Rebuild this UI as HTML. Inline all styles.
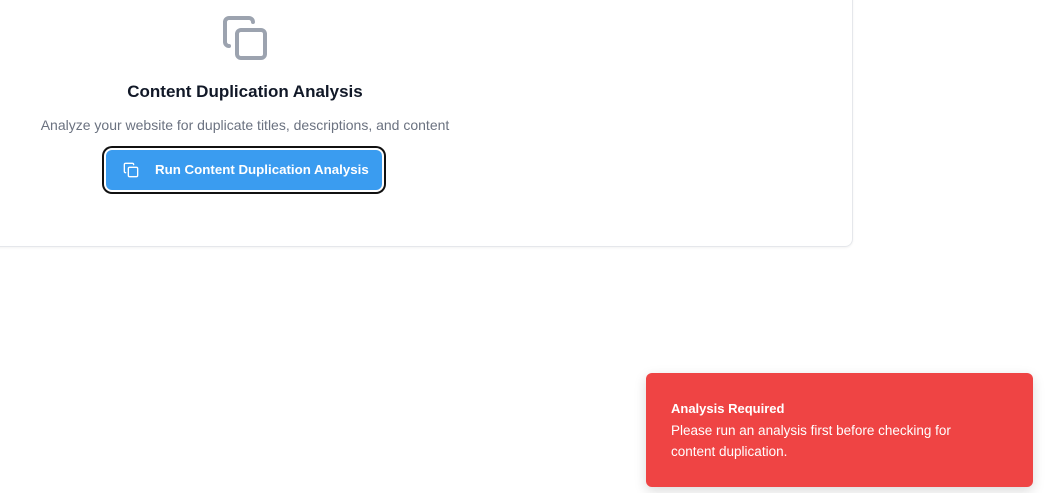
<!DOCTYPE html>
<html><head><style>
body{margin:0;width:1049px;height:493px;background:#fff;font-family:"Liberation Sans",sans-serif;position:relative;overflow:hidden}
.card{position:absolute;left:-400px;top:-10px;width:1251px;height:255px;border:1px solid #e5e7eb;border-radius:8px;box-shadow:0 1px 2px rgba(0,0,0,.05)}
.c{position:absolute;left:0;width:490px;text-align:center}
.btn{position:absolute;left:106px;top:150px;width:276px;height:40px;box-sizing:border-box;background:#3a9cf0;border-radius:6px;box-shadow:0 0 0 2px #fff,0 0 0 4px #111;color:#fff;font-weight:bold;font-size:13.3px;line-height:40px}
.toast{position:absolute;left:646px;top:373px;width:387px;height:114px;background:#ef4444;border-radius:6px;box-shadow:0 4px 12px rgba(0,0,0,.15);color:#fff;box-sizing:border-box;padding:28px 25px}
</style></head><body>
<div class="card"></div>
<svg style="position:absolute;left:221px;top:14px" width="48" height="48" viewBox="0 0 24 24" fill="none" stroke="#9ca3af" stroke-width="2" stroke-linecap="round" stroke-linejoin="round"><rect x="8" y="8" width="14" height="14" rx="2"/><path d="M4 16c-1.1 0-2-.9-2-2V4c0-1.1.9-2 2-2h10c1.1 0 2 .9 2 2"/></svg>
<div class="c" style="top:82px;font-size:17px;font-weight:bold;color:#111827">Content Duplication Analysis</div>
<div class="c" style="top:117px;font-size:14px;color:#6b7280">Analyze your website for duplicate titles, descriptions, and content</div>
<div class="btn"><svg style="position:absolute;left:17px;top:12px" width="16" height="16" viewBox="0 0 24 24" fill="none" stroke="#fff" stroke-width="2" stroke-linecap="round" stroke-linejoin="round"><rect x="8" y="8" width="14" height="14" rx="2"/><path d="M4 16c-1.1 0-2-.9-2-2V4c0-1.1.9-2 2-2h10c1.1 0 2 .9 2 2"/></svg><span style="position:absolute;left:49px">Run Content Duplication Analysis</span></div>
<div class="toast"><div style="font-weight:bold;font-size:13px;margin-bottom:4px">Analysis Required</div><div style="font-size:13.5px;line-height:21px;width:300px">Please run an analysis first before checking for content duplication.</div></div>
</body></html>
